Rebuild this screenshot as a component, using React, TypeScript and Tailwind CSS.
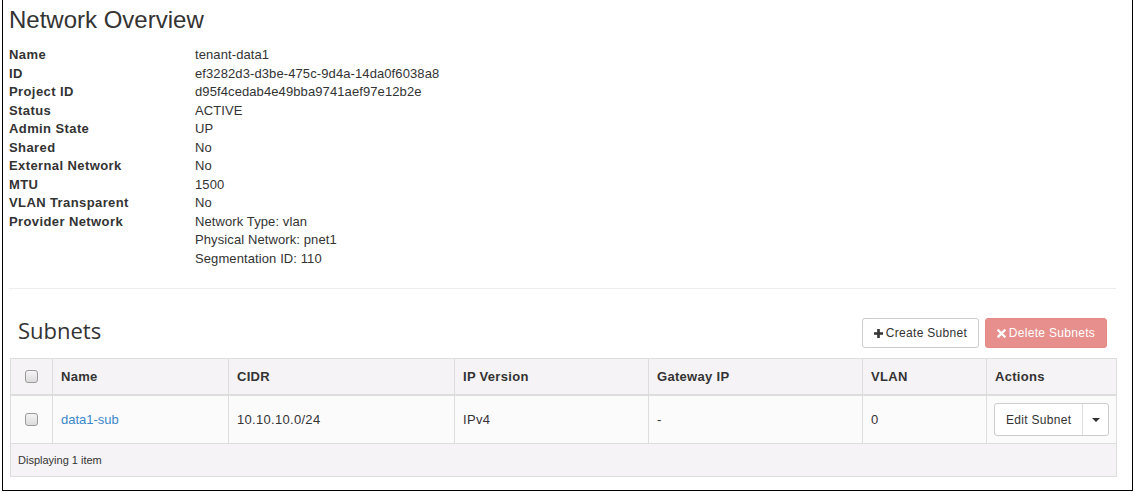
import React from "react";

const SANS = "font-['Liberation_Sans',Arial,sans-serif]";

const overview: [string, string[]][] = [
  ["Name", ["tenant-data1"]],
  ["ID", ["ef3282d3-d3be-475c-9d4a-14da0f6038a8"]],
  ["Project ID", ["d95f4cedab4e49bba9741aef97e12b2e"]],
  ["Status", ["ACTIVE"]],
  ["Admin State", ["UP"]],
  ["Shared", ["No"]],
  ["External Network", ["No"]],
  ["MTU", ["1500"]],
  ["VLAN Transparent", ["No"]],
  [
    "Provider Network",
    ["Network Type: vlan", "Physical Network: pnet1", "Segmentation ID: 110"],
  ],
];

const COLS = "grid grid-cols-[41px_176px_226px_194px_214px_124px_130px]";

// Checkbox in the style of the old browser default.
function Check() {
  return (
    <div className="w-[13px] h-[13px] rounded-[3px] border border-[#9a9a9a] bg-gradient-to-b from-[#f4f4f4] to-[#dcdcdc]" />
  );
}

function PlusIcon() {
  return (
    <svg width="9" height="9" viewBox="0 0 9 9" className="mr-[3px]">
      <path d="M3.2 0h2.6v3.2H9v2.6H5.8V9H3.2V5.8H0V3.2h3.2z" fill="#333" />
    </svg>
  );
}

function TimesIcon() {
  return (
    <svg width="9" height="9" viewBox="0 0 9 9" className="mr-[3px]">
      <path
        d="M1.5 1.5l6 6M7.5 1.5l-6 6"
        stroke="#fff"
        strokeWidth="2.4"
        strokeLinecap="square"
      />
    </svg>
  );
}

export default function App() {
  return (
    <div className={`${SANS} bg-white w-[1134px] h-[493px] text-[#333]`}>
      <div className="ml-[2px] w-[1131px] h-[491px] border-x border-b border-black pl-[6px] pt-[7px]">
        <h1 className="text-[24px] leading-[26px] font-normal mb-[13px]">
          Network Overview
        </h1>

        <dl className="text-[13px] leading-[18.5px]">
          {overview.map(([label, values]) => (
            <div key={label} className="flex">
              <dt className="w-[186px] font-bold tracking-[0.4px]">{label}</dt>
              <dd className="tracking-[0.1px]">
                {values.map((v) => (
                  <div key={v}>{v}</div>
                ))}
              </dd>
            </div>
          ))}
        </dl>

        <div className="mt-[20px] w-[1107px] border-t border-[#eeeeee]" />

        <div className="mt-[29px] h-[30px] w-[1108px] flex items-start justify-between pr-[10px]">
          <h2 className="pl-[9px] font-['Open_Sans',sans-serif] text-[22px] leading-[24px] text-[#333]">
            Subnets
          </h2>
          <div className="flex gap-[6px] text-[12px]">
            <button className="h-[30px] w-[117px] flex items-center justify-center rounded-[3px] border border-[#cccccc] bg-white text-[#333] tracking-[0.3px]">
              <PlusIcon />
              Create Subnet
            </button>
            <button className="h-[30px] w-[122px] flex items-center justify-center rounded-[3px] border border-[#e48a86] bg-[#e68f8c] text-white tracking-[0.3px]">
              <TimesIcon />
              Delete Subnets
            </button>
          </div>
        </div>

        <div className="mt-[10px] ml-[1px] w-[1107px] border border-[#dddddd]">
          <div
            className={`${COLS} h-[37px] bg-[#f5f3f5] border-b-2 border-[#dddddd] text-[13px] font-bold tracking-[0.3px]`}
          >
            <div className="flex items-center justify-center">
              <Check />
            </div>
            {["Name", "CIDR", "IP Version", "Gateway IP", "VLAN", "Actions"].map(
              (h) => (
                <div
                  key={h}
                  className="flex items-center pl-[8px] border-l border-[#dddddd]"
                >
                  {h}
                </div>
              ),
            )}
          </div>

          <div
            className={`${COLS} h-[48px] bg-[#fcfbfc] border-b border-[#dddddd] text-[13px] tracking-[0.3px]`}
          >
            <div className="flex items-center justify-center">
              <Check />
            </div>
            <div className="flex items-center pl-[8px] border-l border-[#dddddd] text-[#3a87c8] tracking-normal">
              data1-sub
            </div>
            <div className="flex items-center pl-[8px] border-l border-[#dddddd]">
              10.10.10.0/24
            </div>
            <div className="flex items-center pl-[8px] border-l border-[#dddddd]">
              IPv4
            </div>
            <div className="flex items-center pl-[8px] border-l border-[#dddddd]">
              -
            </div>
            <div className="flex items-center pl-[8px] border-l border-[#dddddd]">
              0
            </div>
            <div className="flex items-center pl-[7px] border-l border-[#dddddd]">
              <div className="flex h-[33px] rounded-[3px] border border-[#cccccc] bg-white text-[12px] tracking-[0.3px]">
                <span className="flex items-center px-[11px] border-r border-[#dddddd]">
                  Edit Subnet
                </span>
                <span className="flex items-center justify-center w-[25px]">
                  <svg width="8" height="4" viewBox="0 0 8 4">
                    <path d="M0 0h8L4 4z" fill="#333" />
                  </svg>
                </span>
              </div>
            </div>
          </div>

          <div className="h-[32px] bg-[#f5f3f5] flex items-center pl-[7px] text-[11px]">
            Displaying 1 item
          </div>
        </div>
      </div>
    </div>
  );
}
